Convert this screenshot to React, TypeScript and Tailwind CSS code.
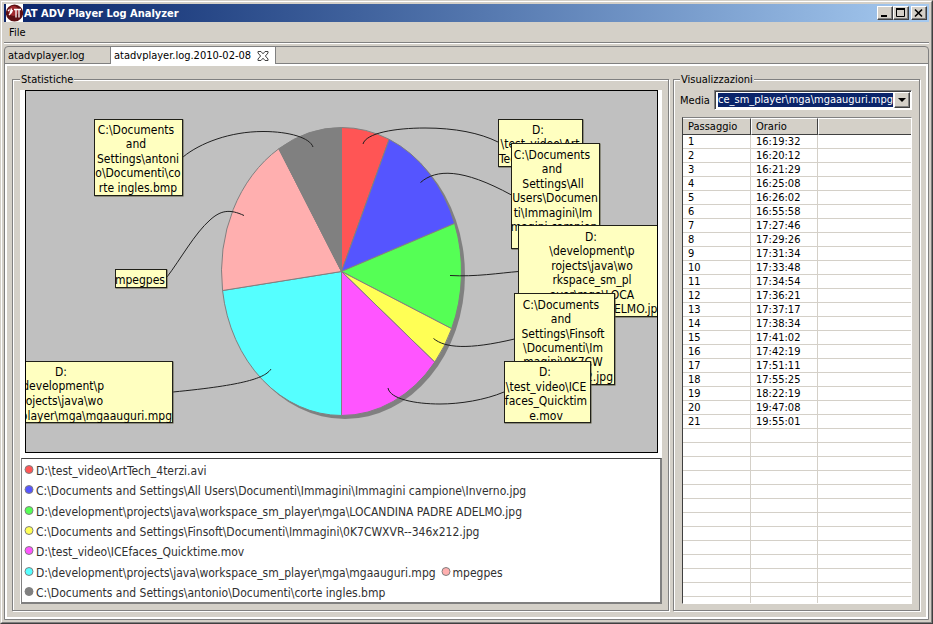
import React, { useState } from "react";

type Slice = { name: string; color: string; from: number; to: number };

const slices: Slice[] = [
  { name: "D:\\test_video\\ArtTech_4terzi.avi", color: "#ff5555", from: 0, to: 23.4 },
  { name: "C:\\Documents and Settings\\All Users\\Documenti\\Immagini\\Immagini campione\\Inverno.jpg", color: "#5555ff", from: 23.4, to: 70.5 },
  { name: "D:\\development\\projects\\java\\workspace_sm_player\\mga\\LOCANDINA PADRE ADELMO.jpg", color: "#55ff55", from: 70.5, to: 113.4 },
  { name: "C:\\Documents and Settings\\Finsoft\\Documenti\\Immagini\\0K7CWXVR--346x212.jpg", color: "#ffff55", from: 113.4, to: 129 },
  { name: "D:\\test_video\\ICEfaces_Quicktime.mov", color: "#ff55ff", from: 129, to: 180 },
  { name: "D:\\development\\projects\\java\\workspace_sm_player\\mga\\mgaauguri.mpg", color: "#55ffff", from: 180, to: 262.4 },
  { name: "mpegpes", color: "#ffafaf", from: 262.4, to: 328.5 },
  { name: "C:\\Documents and Settings\\antonio\\Documenti\\corte ingles.bmp", color: "#808080", from: 328.5, to: 360 },
];

const legendRows = [[0], [1], [2], [3], [4], [5, 6], [7]];

const CX = 341.5;
const CY = 271.5;
const RX = 120;
const RY = 144;

function slicePath(from: number, to: number) {
  const point = (deg: number) => {
    const a = (deg * Math.PI) / 180;
    return `${(CX + RX * Math.sin(a)).toFixed(2)} ${(CY - RY * Math.cos(a)).toFixed(2)}`;
  };
  return `M${CX} ${CY}L${point(from)}A${RX} ${RY} 0 0 1 ${point(to)}Z`;
}

type Line = [string, number, number, ("start" | "middle" | "end")?];
type Callout = { x: number; y: number; w: number; h: number; lines: Line[] };

const callouts: Callout[] = [
  {
    x: 94.5, y: 119.5, w: 88, h: 76,
    lines: [
      ["C:\\Documents", 136, 134],
      ["and", 136, 148],
      ["Settings\\antoni", 138, 163],
      ["o\\Documenti\\co", 138, 177],
      ["rte ingles.bmp", 138, 192],
    ],
  },
  { x: 115.5, y: 269.5, w: 51, h: 18, lines: [["mpegpes", 140, 284]] },
  {
    x: 20.5, y: 361.5, w: 152, h: 61,
    lines: [
      ["D:", 61, 376],
      ["development\\p", 104, 390, "end"],
      ["ojects\\java\\wo", 103, 405, "end"],
      ["player\\mga\\mgaauguri.mpg", 172, 420, "end"],
    ],
  },
  {
    x: 498.5, y: 119.5, w: 84, h: 47,
    lines: [
      ["D:", 538, 134],
      ["\\test_video\\Art", 540, 148],
      ["Tech_4terzi.avi", 499, 163, "start"],
    ],
  },
  {
    x: 511.5, y: 143.5, w: 88, h: 105,
    lines: [
      ["C:\\Documents", 552, 159],
      ["and", 552, 173],
      ["Settings\\All", 553, 188],
      ["Users\\Documen", 555, 202],
      ["ti\\Immagini\\Im", 553, 217],
      ["magini campion", 554, 231],
    ],
  },
  {
    x: 518.5, y: 225.5, w: 145, h: 91,
    lines: [
      ["D:", 591, 241],
      ["\\development\\p", 592, 255],
      ["rojects\\java\\wo", 592, 270],
      ["rkspace_sm_pl", 592, 284],
      ["ayer\\mga\\LOCA", 592, 299],
      ["ELMO.jpg", 614, 313, "start"],
    ],
  },
  {
    x: 514.5, y: 293.5, w: 100, h: 91,
    lines: [
      ["C:\\Documents", 561, 309],
      ["and", 561, 323],
      ["Settings\\Finsoft", 563, 338],
      ["\\Documenti\\Im", 563, 352],
      ["magini\\0K7CW", 563, 366],
      ["XVR--346x212.jpg", 613, 381, "end"],
    ],
  },
  {
    x: 504.5, y: 361.5, w: 86, h: 61,
    lines: [
      ["D:", 545, 376],
      ["\\test_video\\ICE", 546, 391],
      ["faces_Quicktim", 546, 405],
      ["e.mov", 546, 420],
    ],
  },
];

const connectors = [
  "M183 157C200 143 230 131.5 263 131.5C290 131.5 310 138 313 147",
  "M363 144C366 133 395 128 425 128C455 128 480 133 498 142",
  "M420.5 182.5C436 169 462 168 511.5 195",
  "M450 275.5C475 277 500 273 518.5 271.5",
  "M433.5 338.5C445 348 468 350 514.5 339",
  "M388 388C390 399 415 404 440 404C460 404 485 400 504 392",
  "M271 369C265 378 245 385 173 392",
  "M244 215.5C230 209 221 210 210 220C195 233 180 260 167 277",
];

const times = [
  "16:19:32", "16:20:12", "16:21:29", "16:25:08", "16:26:02", "16:55:58", "17:27:46",
  "17:29:26", "17:31:34", "17:33:48", "17:34:54", "17:36:21", "17:37:17", "17:38:34",
  "17:41:02", "17:42:19", "17:51:11", "17:55:25", "18:22:19", "19:47:08", "19:55:01",
];

const raised =
  "border border-t-white border-l-white border-r-[#404040] border-b-[#404040] bg-[#d4d0c8] shadow-[inset_-1px_-1px_0_#808080]";

function TitleBar() {
  return (
    <header className="flex h-[18px] shrink-0 items-center bg-linear-to-r from-[#0a246a] to-[#a6caf0] pr-[2px] pl-[2px]">
      <svg viewBox="0 0 17 18" className="h-[18px] w-[17px] shrink-0" aria-hidden="true">
        <rect width="17" height="18" fill="#fff" />
        <circle cx="8.5" cy="9" r="8.6" fill="#5e1013" />
        <circle cx="7.5" cy="7" r="5" fill="#a02a2e" />
        <path d="M8 5.5H15M10 5.5V13.5M13 5.5V13.5M2 7L3.5 5.5M5.500 4.500L4 10M6.500 6L5.500 8.500L3 11" stroke="#fff" strokeWidth="1.300" fill="none" />
      </svg>
      <h1 className="min-w-0 flex-1 truncate pt-px pl-px font-bold text-white">AT ADV Player Log Analyzer</h1>
      <div className="flex">
        <button type="button" aria-label="Minimize" className={`flex h-[14px] w-4 items-center justify-center ${raised}`}>
          <svg viewBox="0 0 12 10" className="h-[10px] w-3"><path d="M2 8h6" stroke="#000" strokeWidth="2" /></svg>
        </button>
        <button type="button" aria-label="Maximize" className={`flex h-[14px] w-4 items-center justify-center ${raised}`}>
          <svg viewBox="0 0 12 10" className="h-[10px] w-3"><path d="M1.500 1V8.500H9.500V1M1 1H10" stroke="#000" fill="none" /><path d="M1 1h9" stroke="#000" strokeWidth="2" /></svg>
        </button>
        <button type="button" aria-label="Close" className={`ml-[2px] flex h-[14px] w-4 items-center justify-center ${raised}`}>
          <svg viewBox="0 0 12 10" className="h-[10px] w-3"><path d="M2 1.500L9 8.500M9 1.500L2 8.500" stroke="#000" strokeWidth="1.600" /></svg>
        </button>
      </div>
    </header>
  );
}

function Tabs() {
  return (
    <div role="tablist" className="flex h-[17px] shrink-0">
      <button type="button" role="tab" aria-selected="false" className="w-[105px] border-b border-[#808080] pt-[2px] pl-[3px] text-left">
        atadvplayer.log
      </button>
      <div className="flex w-[166px] items-center justify-between border-x border-[#808080] bg-white pr-[6px] pl-[3px]">
        <button type="button" role="tab" aria-selected="true" className="pt-px">atadvplayer.log.2010-02-08</button>
        <button type="button" aria-label="Close tab">
          <svg viewBox="0 0 12 12" className="size-3">
            <path d="M1 1.500H4L6 3.800L8 1.500H11V3L8.400 6L11 9V10.500H8L6 8.200L4 10.500H1V9L3.600 6L1 3Z" fill="#fff" stroke="#404040" />
          </svg>
        </button>
      </div>
      <div className="flex-1 border-b border-[#808080]" />
    </div>
  );
}

function PieChart() {
  return (
    <svg viewBox="26 91 631 361" className="size-full" role="img" aria-label="Statistiche">
      <ellipse cx={CX + 3.5} cy={CY + 3.5} rx={RX} ry={RY} fill="#808080" />
      {slices.map((s) => (
        <path key={s.name} d={slicePath(s.from, s.to)} fill={s.color} stroke="#808080" strokeLinejoin="round" />
      ))}
      {connectors.map((d) => (
        <path key={d} d={d} fill="none" stroke="#202020" />
      ))}
      {callouts.map((c) => (
        <g key={`${c.x}-${c.y}`}>
          <rect x={c.x + 0.5} y={c.y + 0.5} width={c.w} height={c.h} fill="none" stroke="#55553a" />
          <rect x={c.x} y={c.y} width={c.w} height={c.h} fill="#ffffc0" stroke="#202018" />
          {c.lines.map(([text, x, y, anchor]) => (
            <text key={text} x={x} y={y} textAnchor={anchor ?? "middle"} className="text-[12px]">
              {text}
            </text>
          ))}
        </g>
      ))}
    </svg>
  );
}

function Group({ title, className, children }: { title: string; className: string; children: React.ReactNode }) {
  return (
    <fieldset
      className={`flex min-h-0 min-w-0 flex-col border border-[#808080] shadow-[1px_1px_0_#fff,inset_1px_1px_0_#fff] ${className}`}
    >
      <legend className="h-[14px] bg-[#d4d0c8] px-px leading-[15px]">{title}</legend>
      {children}
    </fieldset>
  );
}

function Statistics() {
  return (
    <Group title="Statistiche" className="pt-1 pr-[6px] pb-[6px] pl-[7px]">
      <div className="flex min-h-0 flex-1 flex-col gap-[5px] bg-white">
        <div className="mr-1 ml-[5px] min-h-0 flex-1 overflow-hidden border border-black bg-[#c0c0c0]">
          <PieChart />
        </div>
        <ul className="ml-px flex h-[146px] shrink-0 flex-col border border-r-2 border-b-2 border-[#808080] border-t-[#404040] pt-px pl-[2px] text-[12px] text-[#303030]">
          {legendRows.map((row) => (
            <li key={row[0]} className="flex flex-1 items-center gap-[5px]">
              {row.map((i) => (
                <span key={i} className="flex items-center gap-[2px]">
                  <svg viewBox="0 0 10 10" className="size-[10px]" aria-hidden="true">
                    <circle cx="5" cy="4.500" r="4" fill={slices[i].color} stroke="#808080" />
                  </svg>
                  <span className="pt-[2px]">{slices[i].name}</span>
                </span>
              ))}
            </li>
          ))}
        </ul>
      </div>
    </Group>
  );
}

function Views() {
  const [media, setMedia] = useState("mga");
  return (
    <Group title="Visualizzazioni" className="gap-[7px] pt-1 pr-[7px] pb-[6px] pl-[6px]">
      <div className="flex h-5 shrink-0 items-center justify-between">
        <label htmlFor="media" className="pt-[2px]">Media</label>
        <div className="flex h-5 w-[198px] items-center border border-t-[#808080] border-r-white border-b-white border-l-[#808080] bg-white pl-[3px] shadow-[inset_1px_1px_0_#404040]">
          <select
            id="media"
            value={media}
            onChange={(e) => setMedia(e.target.value)}
            className="h-[14px] min-w-0 flex-1 appearance-none bg-[#0a246a] text-white"
          >
            <option value="mga">ce_sm_player\mga\mgaauguri.mpg</option>
          </select>
          <span className={`mr-px ml-px flex h-4 w-4 items-center justify-center ${raised}`} aria-hidden="true">
            <svg viewBox="0 0 8 4" className="h-1 w-2"><path d="M0 0H8L4 4Z" /></svg>
          </span>
        </div>
      </div>
      <div className="ml-[2px] min-h-0 flex-1 overflow-hidden border border-t-[#808080] border-r-white border-b-white border-l-[#404040] bg-white">
        <table className="w-full table-fixed border-separate border-spacing-0">
          <colgroup>
            <col className="w-[68px]" />
            <col className="w-[67px]" />
            <col />
          </colgroup>
          <thead>
            <tr className="h-[17px] bg-[#d4d0c8] text-left leading-[14px]">
              <th className="border-t border-r border-b border-t-white border-r-[#404040] border-b-[#404040] pt-px pl-[5px] font-normal">Passaggio</th>
              <th className="border-t border-r border-b border-l border-t-white border-r-[#404040] border-b-[#404040] border-l-white pt-px pl-[4px] font-normal">Orario</th>
              <th className="border-t border-b border-l border-t-white border-b-[#404040] border-l-white" />
            </tr>
          </thead>
          <tbody>
            {Array.from({ length: 40 }, (_, i) => (
              <tr key={i} className="h-[14px] leading-[12px]">
                <td className="h-[14px] border-r border-b border-[#d4d0c8] pt-px pl-[5px]">{i < times.length ? i + 1 : null}</td>
                <td className="border-r border-b border-[#d4d0c8] pt-px pl-[5px]">{times[i]}</td>
                <td className="border-b border-[#d4d0c8]" />
              </tr>
            ))}
          </tbody>
        </table>
      </div>
    </Group>
  );
}

export default function App() {
  return (
    <div className="h-screen border border-t-[#d4d0c8] border-r-[#404040] border-b-[#404040] border-l-[#d4d0c8] bg-[#d4d0c8] font-['DejaVu_Sans_Condensed','DejaVu_Sans',sans-serif] text-[11px] leading-[14px] text-black">
      <div className="flex h-full flex-col border border-t-white border-r-[#808080] border-b-[#808080] border-l-white p-[2px]">
        <TitleBar />
        <nav className="flex h-5 shrink-0 items-center pt-px pl-[5px]">
          <button type="button">File</button>
        </nav>
        <div className="mb-[2px] h-[2px] shrink-0 border-t border-b border-t-[#808080] border-b-white" />
        <main className="flex min-h-0 flex-1 flex-col rounded-t-[4px] border border-[#808080]">
          <Tabs />
          <div className="grid min-h-0 flex-1 grid-cols-[minmax(0,1fr)_247px] grid-rows-[minmax(0,1fr)] gap-1 border-2 border-white pt-[6px] pr-[6px] pb-[6px] pl-[5px]">
            <Statistics />
            <Views />
          </div>
        </main>
      </div>
    </div>
  );
}
